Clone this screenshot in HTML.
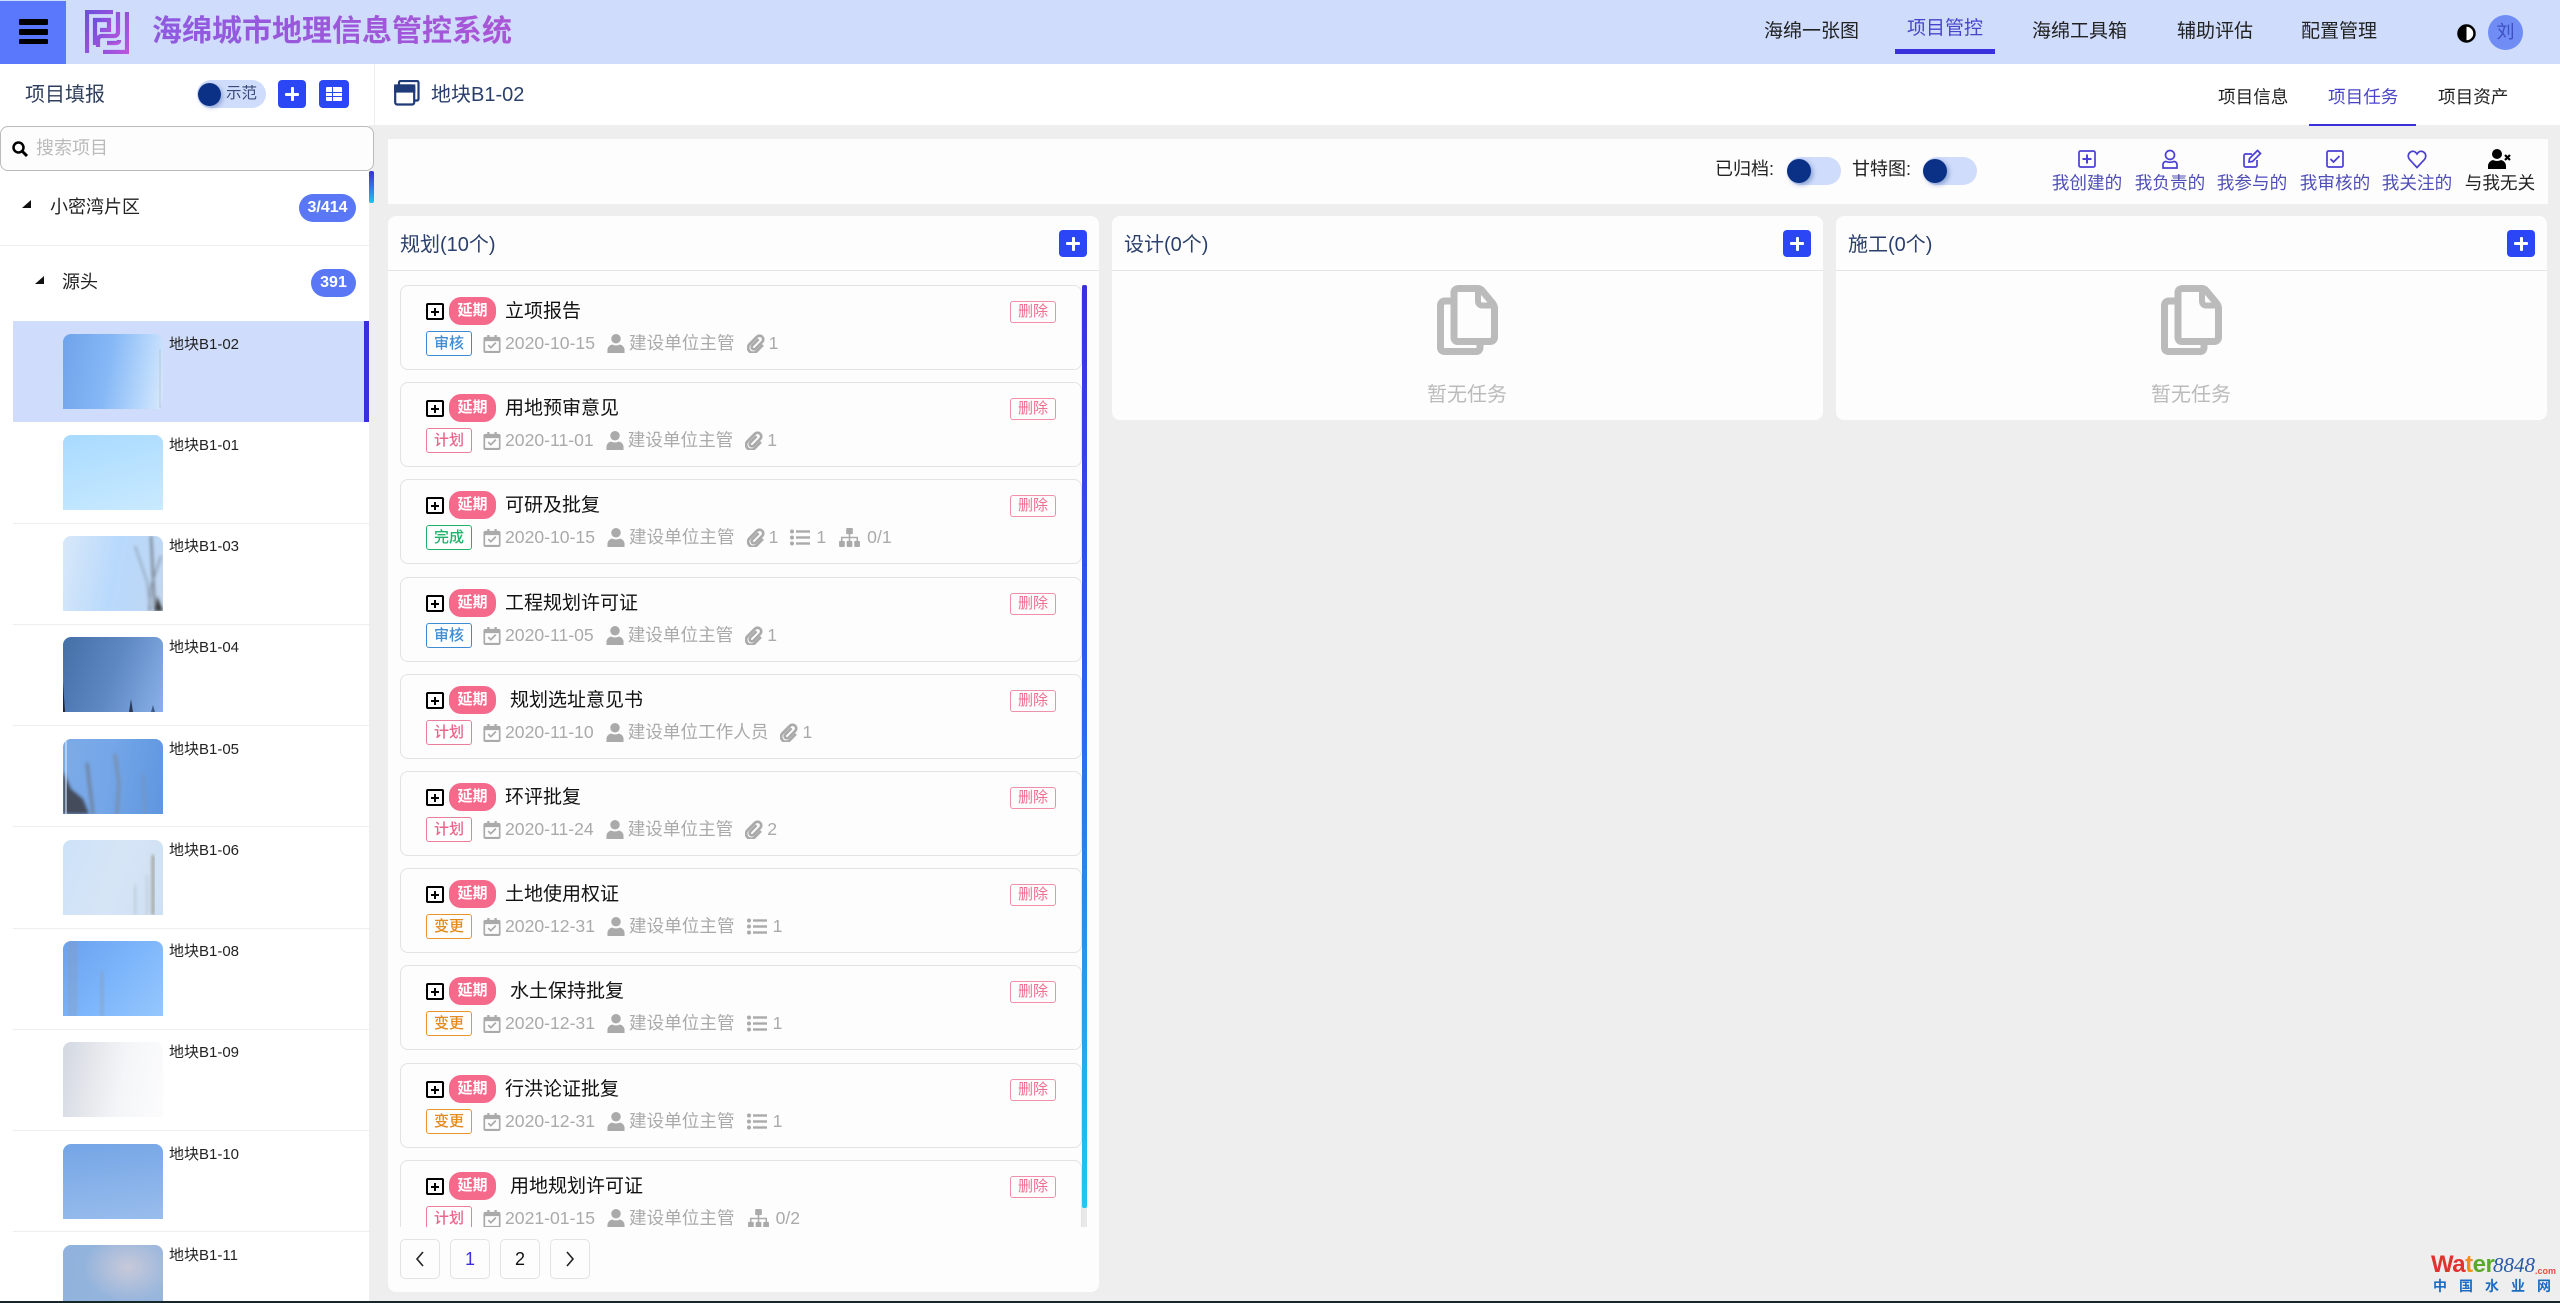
<!DOCTYPE html>
<html lang="zh-CN">
<head>
<meta charset="utf-8">
<title>海绵城市地理信息管控系统</title>
<style>
html,body{margin:0;padding:0;background:#eee;width:2560px;height:1303px;overflow:hidden}
#root{position:absolute;left:0;top:0;width:2560px;height:1303px;overflow:hidden;font-family:"Liberation Sans","Noto Sans CJK SC",sans-serif;color:#222}
div,span,svg{box-sizing:border-box}
.a{position:absolute}
.t{position:absolute;white-space:nowrap;line-height:1.2}
.w{background:#fff}
.sq{position:absolute;background:#2b46f4;border-radius:4px}
.sq i{position:absolute;background:#fff;border-radius:1px}
.badge{position:absolute;height:28px;border-radius:14px;background:#5a78f5;color:#fff;font-weight:bold;font-size:16px;line-height:28px;text-align:center}
.tri{position:absolute;width:0;height:0;border-left:9px solid transparent;border-bottom:8px solid #111}
.item{position:absolute;left:13px;width:356px;height:101px}
.line{position:absolute;left:13px;width:356px;height:1px;background:#eee}
.th{position:absolute;left:63px;width:100px;height:75px;border-radius:8px 8px 0 0;overflow:hidden}
.th svg{position:absolute;left:0;top:0;width:100px;height:75px}
.nm{position:absolute;left:169px;font-size:15px;line-height:18px;color:#222;white-space:nowrap}
.col{position:absolute;background:#fdfdfd;border-radius:8px}
.colh{position:absolute;left:0;right:0;top:54px;height:1px;background:#e4e4e4}
.ct{position:absolute;top:17px;font-size:20px;line-height:24px;color:#2a3f6c;white-space:nowrap}
.card{position:absolute;left:0;width:682px;height:85px;background:#fdfdfd;border:1px solid #e3e3e3;border-radius:8px}
.ex{position:absolute;left:25px;top:17px;width:18px;height:17px;border:2px solid #000;border-radius:2px}
.ex:before{content:"";position:absolute;left:3px;top:6px;width:8px;height:1.500px;background:#000}
.ex:after{content:"";position:absolute;left:6.300px;top:3px;width:1.500px;height:8px;background:#000}
.yq{position:absolute;left:48px;top:11px;width:47px;height:28px;border-radius:12px;background:#f5698b;color:#fff;font-size:15px;line-height:28px;text-align:center;font-weight:bold}
.tt{position:absolute;left:104px;top:14px;font-size:19px;line-height:23px;color:#111;white-space:nowrap}
.del{position:absolute;left:609px;top:15px;width:46px;height:22px;border:1px solid #f08fa9;border-radius:3px;color:#ee6f90;font-size:15px;line-height:20px;text-align:center}
.tag{position:absolute;left:25px;top:45px;width:46px;height:25px;border:1px solid;border-radius:3px;font-size:15px;line-height:23px;text-align:center;background:#fff;font-weight:500}
.blue{color:#3d8bd4;border-color:#3d8bd4}.pink{color:#e8668b;border-color:#ea7d9b}.green{color:#1fb36a;border-color:#1fb36a}.orange{color:#e58a1c;border-color:#e8962c}
.meta{position:absolute;left:82px;top:45px;height:24px;display:flex;align-items:center;color:#aaa;font-size:17.6px;line-height:24px;white-space:nowrap}
.meta svg{fill:#aaa;flex:none}
.meta span{display:block}
.ic{width:18px;height:19px;margin-right:4px}
.ml{margin-left:12px}
.lg{width:20px;margin-right:6px}
.og{width:23px;margin-right:6px}
.pg{position:absolute;top:1239px;width:40px;height:40px;border:1px solid #e3e3e3;border-radius:5px;background:#fdfdfd;text-align:center;font-size:18px;line-height:38px}
.f{position:absolute;top:146px;width:80px;text-align:center;color:#4f4fb8;font-size:17.6px}
.f svg{display:block;margin:3px auto 0;width:20px;height:20px;fill:none;stroke:#4a3fd0;stroke-width:1.7}
.f span{display:block;line-height:22px;margin-top:3px;white-space:nowrap}
.tg{position:absolute;height:28px;width:54px;border-radius:14px;background:#cfdcfb}
.tg i{position:absolute;left:0;top:2px;width:24px;height:24px;border-radius:50%;background:#0a3186;box-shadow:2px 2px 5px rgba(10,49,134,.35)}
</style>
</head>
<body>
<div id="root">
<svg width="0" height="0" style="position:absolute">
<defs>
<symbol id="cal" viewBox="0 0 18 20"><path d="M4 1h2.400v2h5.200V1H14v2h2a2 2 0 0 1 2 2v13a2 2 0 0 1-2 2H2a2 2 0 0 1-2-2V5a2 2 0 0 1 2-2h2zM1.800 7.500v10.200h14.400V7.500zM4.400 12.400l1.300-1.300 2 2 4.700-4.700 1.300 1.300-6 6z"/></symbol>
<symbol id="usr" viewBox="0 0 18 20"><circle cx="9" cy="5" r="5"/><path d="M0 20v-3.500a6 6 0 0 1 5-5.500c2.400 1.300 5.600 1.300 8 0a6 6 0 0 1 5 5.500V20z"/></symbol>
<symbol id="clip" viewBox="0 0 18 20"><path d="M15.500 3a4 4 0 0 0-5.600 0L2.200 10.700a5.300 5.300 0 0 0 7.500 7.500l6.600-6.700" fill="none" stroke="#aaa" stroke-width="2.800"/><path d="M15.500 3a3.800 3.800 0 0 1 0 5.400l-7 7a2.400 2.400 0 0 1-3.400-3.400l6.600-6.600" fill="none" stroke="#aaa" stroke-width="2.800"/></symbol>
<symbol id="lst" viewBox="0 0 20 18"><circle cx="2" cy="3" r="2"/><circle cx="2" cy="9" r="2"/><circle cx="2" cy="15" r="2"/><rect x="6" y="1.800" width="14" height="2.400"/><rect x="6" y="7.800" width="14" height="2.400"/><rect x="6" y="13.800" width="14" height="2.400"/></symbol>
<symbol id="org" viewBox="0 0 22 20"><rect x="7.500" y="0" width="7" height="6.500" rx="1"/><rect x="0" y="13.500" width="6" height="6.500" rx="1"/><rect x="8" y="13.500" width="6" height="6.500" rx="1"/><rect x="16" y="13.500" width="6" height="6.500" rx="1"/><path d="M10.200 6h1.600v3.200H20v4.500h-1.600v-2.900h-6.600v2.900h-1.600v-2.900H3.600v2.900H2V9.200h8.200z"/></symbol>
<symbol id="docs" viewBox="0 0 61 70"><path d="M22 3.500h19c2 0 3 .8 4 2l10 12c1.500 1.800 2.500 3.500 2.500 5.500v29c0 3-2 4.500-4.500 4.500H21c-2.500 0-4-1.500-4-4.500V7.500c0-2.500 2-4 5-4z" fill="none" stroke="#bbb" stroke-width="7"/><path d="M41 4v12c0 2.500 1.500 4.500 4 4.500h11" fill="none" stroke="#bbb" stroke-width="6"/><path d="M17 16H8c-3 0-4.500 2-4.500 4.500v42C3.500 65 5 66.500 8 66.500h31c3 0 4-2 4-4.500v-5" fill="none" stroke="#bbb" stroke-width="7"/></symbol>
<linearGradient id="lg" x1="0" y1="0" x2="1" y2="1"><stop offset="0" stop-color="#6f4fdc"/><stop offset="1" stop-color="#b855dc"/></linearGradient>
<filter id="bl"><feGaussianBlur stdDeviation="1.500"/></filter>
</defs>
</svg>

<!-- header -->
<div class="a" style="left:0;top:0;width:2560px;height:64px;background:#cfdcfb"></div>
<div class="a" style="left:0;top:1px;width:66px;height:63px;background:#5a78fb"></div>
<div class="a" style="left:19px;top:19px;width:29px;height:6px;background:#000;border-radius:1px"></div>
<div class="a" style="left:19px;top:29px;width:29px;height:6px;background:#000;border-radius:1px"></div>
<div class="a" style="left:19px;top:39px;width:29px;height:5px;background:#000;border-radius:1px"></div>
<svg class="a" style="left:85px;top:10px" width="44" height="44" viewBox="0 0 44 44" fill="none" stroke="url(#lg)" stroke-width="4.200">
<path d="M2 43V2h26"/>
<path d="M10 35V10h14v10h-9"/>
<path d="M33 2v20c0 3-2 4-4 4H17c-3 0-4 2-4 4v7"/>
<path d="M42 2v40H18"/>
<path d="M22 33h9c2 0 3-1 3-2v-1"/>
</svg>
<div class="t" style="left:152px;top:14px;font-size:30px;font-weight:bold;background:linear-gradient(90deg,#8f5ae0,#a955d6);-webkit-background-clip:text;background-clip:text;color:transparent">海绵城市地理信息管控系统</div>
<div class="t" style="left:1764px;top:21px;font-size:19px;color:#222">海绵一张图</div>
<div class="t" style="left:1907px;top:18px;font-size:19px;color:#4a45c8">项目管控</div>
<div class="a" style="left:1895px;top:49px;width:100px;height:5px;background:#3a30dd"></div>
<div class="t" style="left:2032px;top:21px;font-size:19px;color:#222">海绵工具箱</div>
<div class="t" style="left:2177px;top:21px;font-size:19px;color:#222">辅助评估</div>
<div class="t" style="left:2301px;top:21px;font-size:19px;color:#222">配置管理</div>
<svg class="a" style="left:2457px;top:24px" width="19" height="19" viewBox="0 0 19 19"><circle cx="9.500" cy="9.500" r="8" fill="#fff" stroke="#000" stroke-width="2.500"/><path d="M9.500 1.500a8 8 0 0 0 0 16z" fill="#000"/></svg>
<div class="a" style="left:2488px;top:15px;width:35px;height:35px;border-radius:50%;background:#6f8df5;color:#3f4ec0;font-size:18px;line-height:35px;text-align:center">刘</div>

<!-- sidebar -->
<div class="a w" style="left:0;top:64px;width:369px;height:1237px"></div>
<div class="a w" style="left:369px;top:64px;width:5px;height:61px"></div>
<div class="a" style="left:374px;top:64px;width:1px;height:61px;background:#eee"></div>
<div class="t" style="left:25px;top:83px;font-size:20px;color:#2f3e5c">项目填报</div>
<div class="a" style="left:197px;top:80px;width:69px;height:28px;border-radius:14px;background:#cfdcfb"></div>
<div class="a" style="left:198px;top:83px;width:23px;height:23px;border-radius:50%;background:#0a3186;box-shadow:2px 2px 4px rgba(10,49,134,.3)"></div>
<div class="t" style="left:226px;top:85px;font-size:15.500px;color:#3a4a78">示范</div>
<div class="sq" style="left:278px;top:80px;width:28px;height:28px"><i style="left:7px;top:12.500px;width:14px;height:3px"></i><i style="left:12.500px;top:7px;width:3px;height:14px"></i></div>
<div class="sq" style="left:319px;top:80px;width:30px;height:28px"><i style="left:7px;top:7px;width:16px;height:14px;background:#fff"></i><i style="left:7px;top:11.500px;width:16px;height:1px;background:#2b46f4"></i><i style="left:7px;top:16px;width:16px;height:1px;background:#2b46f4"></i><i style="left:13px;top:7px;width:1px;height:14px;background:#2b46f4"></i></div>

<div class="a" style="left:0;top:126px;width:374px;height:45px;background:#fdfdfd;border:1px solid #bbb;border-radius:8px"></div>
<svg class="a" style="left:12px;top:141px" width="17" height="16" viewBox="0 0 17 16" fill="none" stroke="#000" stroke-width="2.500"><circle cx="6.500" cy="6.500" r="5"/><path d="M10 10l5 5" stroke-width="3"/></svg>
<div class="t" style="left:36px;top:138px;font-size:18px;color:#bbb">搜索项目</div>
<div class="a" style="left:369px;top:171px;width:5px;height:1130px;background:#eee"></div>
<div class="a" style="left:369px;top:171px;width:5px;height:32px;border-radius:2px;background:linear-gradient(180deg,#3a2fe0,#22c0ee)"></div>

<div class="tri" style="left:22px;top:200px"></div>
<div class="t" style="left:50px;top:197px;font-size:18px;color:#222">小密湾片区</div>
<div class="badge" style="left:299px;top:194px;width:57px">3/414</div>
<div class="a" style="left:0;top:245px;width:369px;height:1px;background:#eee"></div>
<div class="tri" style="left:35px;top:276px"></div>
<div class="t" style="left:62px;top:272px;font-size:18px;color:#222">源头</div>
<div class="badge" style="left:311px;top:269px;width:45px">391</div>

<div class="item" style="top:321px;background:#cfdcfb"></div>
<div class="a" style="left:364px;top:321px;width:5px;height:101px;background:#3a2fe0"></div>
<div class="line" style="top:523px"></div><div class="line" style="top:624px"></div><div class="line" style="top:725px"></div><div class="line" style="top:826px"></div><div class="line" style="top:928px"></div><div class="line" style="top:1029px"></div><div class="line" style="top:1130px"></div><div class="line" style="top:1231px"></div>

<div class="th" style="top:334px;background:linear-gradient(100deg,#6fa3ea,#86b8f6 45%,#b8d8fc 80%,#d4e7fb 97%,#cfdcfb 98%)"><svg viewBox="0 0 100 75"><path d="M97 15V74" stroke="#aab4bf" stroke-width="1" fill="none" opacity=".6"/></svg></div>
<div class="nm" style="top:336px">地块B1-02</div>
<div class="th" style="top:435px;background:linear-gradient(165deg,#a8daff,#c9eaff)"></div>
<div class="nm" style="top:437px">地块B1-01</div>
<div class="th" style="top:536px;background:linear-gradient(100deg,#d8e8f9,#b9d9fc 50%,#bcd8f7 80%,#c6d6ec)"><svg viewBox="0 0 100 75"><g fill="none" filter="url(#bl)" opacity=".7"><path d="M88 0L90 40 92 75" stroke="#555" stroke-width="2.200"/><path d="M72 10L84 45 88 75" stroke="#7a8590" stroke-width="1.600"/><path d="M98 20L88 50 86 75" stroke="#6a7580" stroke-width="1.600"/></g><path d="M94 60L100 75H92z" fill="#333" filter="url(#bl)"/></svg></div>
<div class="nm" style="top:538px">地块B1-03</div>
<div class="th" style="top:637px;background:linear-gradient(110deg,#436ea6,#5d88c2 50%,#8ab0e9)"><svg viewBox="0 0 100 75"><path d="M0 45L2 75H0z" fill="#223"/><path d="M68 62L70 75H66z" fill="#2a3a55"/><path d="M90 68L92 75H88z" fill="#3a5a88"/></svg></div>
<div class="nm" style="top:639px">地块B1-04</div>
<div class="th" style="top:739px;background:linear-gradient(100deg,#7dabe6,#74a6e8 45%,#5e96df)"><svg viewBox="0 0 100 75"><g filter="url(#bl)" opacity=".85"><path d="M0 32L8 50 20 60 26 75H0z" fill="#3a3a42"/><path d="M24 24L30 75" stroke="#6d7a90" stroke-width="3" fill="none"/><path d="M52 15L56 45 54 75" stroke="#7b8aa0" stroke-width="3" fill="none"/><path d="M80 35L82 75" stroke="#7b92b5" stroke-width="2" fill="none"/></g><path d="M3 0V75" stroke="#d5e5f8" stroke-width="1.200"/></svg></div>
<div class="nm" style="top:741px">地块B1-05</div>
<div class="th" style="top:840px;background:linear-gradient(110deg,#cde2f8,#d6e5f6 50%,#cfe0f4)"><svg viewBox="0 0 100 75"><g fill="none" filter="url(#bl)"><path d="M90 15V75" stroke="#8a8572" stroke-width="2"/><path d="M72 45V75" stroke="#aeb6bd" stroke-width="1.200"/><path d="M84 35V75" stroke="#aeb6bd" stroke-width="1"/></g></svg></div>
<div class="nm" style="top:842px">地块B1-06</div>
<div class="th" style="top:941px;background:linear-gradient(130deg,#6ba1ee,#7cb5fb 50%,#95c7fc)"><svg viewBox="0 0 100 75"><g fill="none" filter="url(#bl)" stroke="#8b97a9"><path d="M7 0V75" stroke-width="1.500"/><path d="M12 0V75" stroke-width="1.500"/><path d="M39 30V75" stroke-width="1.500"/></g></svg></div>
<div class="nm" style="top:943px">地块B1-08</div>
<div class="th" style="top:1042px;background:linear-gradient(100deg,#d2d7e1,#e5e7ec 30%,#f5f6f8 60%,#fcfcfd)"></div>
<div class="nm" style="top:1044px">地块B1-09</div>
<div class="th" style="top:1144px;background:linear-gradient(172deg,#74a5e6,#99bdec)"></div>
<div class="nm" style="top:1146px">地块B1-10</div>
<div class="th" style="top:1245px;height:56px;background:radial-gradient(ellipse 45px 35px at 65% 40%,#c8c9da,rgba(200,201,218,0)),linear-gradient(100deg,#90b2dc,#98b6dc)"></div>
<div class="nm" style="top:1247px">地块B1-11</div>

<!-- main header -->
<div class="a w" style="left:375px;top:64px;width:2185px;height:61px"></div>
<svg class="a" style="left:394px;top:80px" width="26" height="26" viewBox="0 0 26 26" fill="none" stroke="#1f3a78" stroke-width="2.200"><path d="M5 5V2.500A1.500 1.500 0 0 1 6.500 1H23a1.500 1.500 0 0 1 1.500 1.500V19a1.500 1.500 0 0 1-1.500 1.500h-2.500"/><rect x="1.200" y="5.500" width="19" height="19" rx="2"/><rect x="1.200" y="5.500" width="19" height="6" fill="#1f3a78"/></svg>
<div class="t" style="left:431px;top:83px;font-size:20px;color:#2a3f6c">地块B1-02</div>
<div class="t" style="left:2218px;top:87px;font-size:17.600px;color:#222">项目信息</div>
<div class="t" style="left:2328px;top:87px;font-size:17.600px;color:#4a45c8">项目任务</div>
<div class="a" style="left:2309px;top:124px;width:107px;height:2px;background:#3a30dd"></div>
<div class="t" style="left:2438px;top:87px;font-size:17.600px;color:#222">项目资产</div>

<!-- toolbar -->
<div class="a" style="left:388px;top:139px;width:2160px;height:65px;background:#fdfdfd"></div>
<div class="t" style="left:1715px;top:159px;font-size:18px;color:#222">已归档:</div>
<div class="tg" style="left:1787px;top:157px"><i></i></div>
<div class="t" style="left:1852px;top:159px;font-size:18px;color:#222">甘特图:</div>
<div class="tg" style="left:1923px;top:157px"><i></i></div>

<div class="f" style="left:2047px"><svg viewBox="0 0 20 20"><rect x="2" y="2" width="16" height="16" rx="1.500"/><path d="M10 5.500v9M5.500 10h9" stroke-width="2"/></svg><span>我创建的</span></div>
<div class="f" style="left:2130px"><svg viewBox="0 0 20 20"><circle cx="10" cy="6" r="4.500"/><path d="M3 19v-3.500a3 3 0 0 1 3-3c2.500 1 5.500 1 8 0a3 3 0 0 1 3 3V19z"/></svg><span>我负责的</span></div>
<div class="f" style="left:2212px"><svg viewBox="0 0 20 20"><path d="M15 11v5.500a1.500 1.500 0 0 1-1.500 1.500h-10A1.500 1.500 0 0 1 2 16.500v-10A1.500 1.500 0 0 1 3.500 5H10"/><path d="M7.500 9.500L15.500 1.500l3 3-8 8-3.500.5z"/></svg><span>我参与的</span></div>
<div class="f" style="left:2295px"><svg viewBox="0 0 20 20"><rect x="2" y="2" width="16" height="16" rx="1.500"/><path d="M5.500 10l3 3 6-6" stroke-width="1.800"/></svg><span>我审核的</span></div>
<div class="f" style="left:2377px"><svg viewBox="0 0 20 20"><path d="M10 18.500L2.500 10.500C.5 8 1 4.500 3.500 3c2.500-1.500 5-.5 6.500 2 1.500-2.500 4-3.500 6.500-2 2.500 1.500 3 5 1 7.500z"/></svg><span>我关注的</span></div>
<div class="f" style="left:2460px;color:#222"><svg viewBox="0 0 24 20" style="width:24px;stroke:none;fill:#000"><circle cx="9" cy="5" r="5"/><path d="M0 20v-3a6 6 0 0 1 5-6c2.500 1.300 5.500 1.300 8 0a6 6 0 0 1 5 6v3z"/><path d="M17 6l5 5M22 6l-5 5" stroke="#000" stroke-width="2.200"/></svg><span>与我无关</span></div>

<!-- column 1 -->
<div class="col" style="left:388px;top:216px;width:711px;height:1076px">
  <div class="colh"></div>
  <div class="ct" style="left:12px">规划(10个)</div>
  <div class="sq" style="left:671px;top:14px;width:28px;height:27px"><i style="left:7px;top:12px;width:14px;height:3px"></i><i style="left:12.500px;top:6.500px;width:3px;height:14px"></i></div>
</div>
<div class="a" style="left:400px;top:272px;width:682px;height:955px;overflow:hidden">
  <div class="card" style="top:13px"><div class="ex"></div><div class="yq">延期</div><div class="tt">立项报告</div><div class="del">删除</div><div class="tag blue">审核</div>
    <div class="meta"><svg class="ic"><use href="#cal"/></svg><span>2020-10-15</span><svg class="ic ml"><use href="#usr"/></svg><span>建设单位主管</span><svg class="ic ml"><use href="#clip"/></svg><span>1</span></div></div>
  <div class="card" style="top:110px"><div class="ex"></div><div class="yq">延期</div><div class="tt">用地预审意见</div><div class="del">删除</div><div class="tag pink">计划</div>
    <div class="meta"><svg class="ic"><use href="#cal"/></svg><span>2020-11-01</span><svg class="ic ml"><use href="#usr"/></svg><span>建设单位主管</span><svg class="ic ml"><use href="#clip"/></svg><span>1</span></div></div>
  <div class="card" style="top:207px"><div class="ex"></div><div class="yq">延期</div><div class="tt">可研及批复</div><div class="del">删除</div><div class="tag green">完成</div>
    <div class="meta"><svg class="ic"><use href="#cal"/></svg><span>2020-10-15</span><svg class="ic ml"><use href="#usr"/></svg><span>建设单位主管</span><svg class="ic ml"><use href="#clip"/></svg><span>1</span><svg class="ic ml lg"><use href="#lst"/></svg><span>1</span><svg class="ic ml og"><use href="#org"/></svg><span>0/1</span></div></div>
  <div class="card" style="top:305px"><div class="ex"></div><div class="yq">延期</div><div class="tt">工程规划许可证</div><div class="del">删除</div><div class="tag blue">审核</div>
    <div class="meta"><svg class="ic"><use href="#cal"/></svg><span>2020-11-05</span><svg class="ic ml"><use href="#usr"/></svg><span>建设单位主管</span><svg class="ic ml"><use href="#clip"/></svg><span>1</span></div></div>
  <div class="card" style="top:402px"><div class="ex"></div><div class="yq">延期</div><div class="tt" style="left:109px">规划选址意见书</div><div class="del">删除</div><div class="tag pink">计划</div>
    <div class="meta"><svg class="ic"><use href="#cal"/></svg><span>2020-11-10</span><svg class="ic ml"><use href="#usr"/></svg><span>建设单位工作人员</span><svg class="ic ml"><use href="#clip"/></svg><span>1</span></div></div>
  <div class="card" style="top:499px"><div class="ex"></div><div class="yq">延期</div><div class="tt">环评批复</div><div class="del">删除</div><div class="tag pink">计划</div>
    <div class="meta"><svg class="ic"><use href="#cal"/></svg><span>2020-11-24</span><svg class="ic ml"><use href="#usr"/></svg><span>建设单位主管</span><svg class="ic ml"><use href="#clip"/></svg><span>2</span></div></div>
  <div class="card" style="top:596px"><div class="ex"></div><div class="yq">延期</div><div class="tt">土地使用权证</div><div class="del">删除</div><div class="tag orange">变更</div>
    <div class="meta"><svg class="ic"><use href="#cal"/></svg><span>2020-12-31</span><svg class="ic ml"><use href="#usr"/></svg><span>建设单位主管</span><svg class="ic ml lg"><use href="#lst"/></svg><span>1</span></div></div>
  <div class="card" style="top:693px"><div class="ex"></div><div class="yq">延期</div><div class="tt" style="left:109px">水土保持批复</div><div class="del">删除</div><div class="tag orange">变更</div>
    <div class="meta"><svg class="ic"><use href="#cal"/></svg><span>2020-12-31</span><svg class="ic ml"><use href="#usr"/></svg><span>建设单位主管</span><svg class="ic ml lg"><use href="#lst"/></svg><span>1</span></div></div>
  <div class="card" style="top:791px"><div class="ex"></div><div class="yq">延期</div><div class="tt">行洪论证批复</div><div class="del">删除</div><div class="tag orange">变更</div>
    <div class="meta"><svg class="ic"><use href="#cal"/></svg><span>2020-12-31</span><svg class="ic ml"><use href="#usr"/></svg><span>建设单位主管</span><svg class="ic ml lg"><use href="#lst"/></svg><span>1</span></div></div>
  <div class="card" style="top:888px"><div class="ex"></div><div class="yq">延期</div><div class="tt" style="left:109px">用地规划许可证</div><div class="del">删除</div><div class="tag pink">计划</div>
    <div class="meta"><svg class="ic"><use href="#cal"/></svg><span>2021-01-15</span><svg class="ic ml"><use href="#usr"/></svg><span>建设单位主管</span><svg class="ic ml og"><use href="#org"/></svg><span>0/2</span></div></div>
</div>
<div class="a" style="left:1082px;top:285px;width:5px;height:942px;background:#e8e8e8"></div>
<div class="a" style="left:1082px;top:285px;width:5px;height:923px;border-radius:2px;background:linear-gradient(180deg,#3a2fe0,#2f5bea 40%,#20c8ee)"></div>
<div class="pg" style="left:400px"><svg width="12" height="18" viewBox="0 0 12 18" fill="none" stroke="#222" stroke-width="1.600" style="vertical-align:-3px"><path d="M9 2L3 9l6 7"/></svg></div>
<div class="pg" style="left:450px;color:#3a30dd">1</div>
<div class="pg" style="left:500px;color:#111">2</div>
<div class="pg" style="left:550px"><svg width="12" height="18" viewBox="0 0 12 18" fill="none" stroke="#222" stroke-width="1.600" style="vertical-align:-3px"><path d="M3 2l6 7-6 7"/></svg></div>

<!-- column 2 -->
<div class="col" style="left:1112px;top:216px;width:711px;height:204px">
  <div class="colh"></div>
  <div class="ct" style="left:12px">设计(0个)</div>
  <div class="sq" style="left:671px;top:14px;width:28px;height:27px"><i style="left:7px;top:12px;width:14px;height:3px"></i><i style="left:12.500px;top:6.500px;width:3px;height:14px"></i></div>
  <svg class="a" style="left:325px;top:69px" width="61" height="70"><use href="#docs"/></svg>
  <div class="t" style="left:315px;top:167px;font-size:20px;color:#bbb">暂无任务</div>
</div>
<!-- column 3 -->
<div class="col" style="left:1836px;top:216px;width:711px;height:204px">
  <div class="colh"></div>
  <div class="ct" style="left:12px">施工(0个)</div>
  <div class="sq" style="left:671px;top:14px;width:28px;height:27px"><i style="left:7px;top:12px;width:14px;height:3px"></i><i style="left:12.500px;top:6.500px;width:3px;height:14px"></i></div>
  <svg class="a" style="left:325px;top:69px" width="61" height="70"><use href="#docs"/></svg>
  <div class="t" style="left:315px;top:167px;font-size:20px;color:#bbb">暂无任务</div>
</div>

<!-- watermark -->
<div class="t" style="left:2431px;top:1253px;font-size:24px;font-weight:bold;line-height:24px;letter-spacing:-.5px"><span style="color:#e0322f">Wa</span><span style="color:#f0901a">t</span><span style="color:#5aaa2a">er</span></div>
<div class="t" style="left:2493px;top:1254px;font-size:21px;line-height:22px;font-family:'Liberation Serif',serif;font-style:italic;color:#2a5aa8">8848</div>
<div class="t" style="left:2535px;top:1266px;font-size:9px;font-weight:bold;line-height:10px;color:#e0503f">.com</div>
<div class="t" style="left:2433px;top:1278px;font-size:14px;font-weight:bold;line-height:16px;letter-spacing:12px;color:#1c6cc4">中国水业网</div>

<!-- bottom line -->
<div class="a" style="left:0;top:1301px;width:2560px;height:2px;background:#17262b"></div>
</div>
</body>
</html>
